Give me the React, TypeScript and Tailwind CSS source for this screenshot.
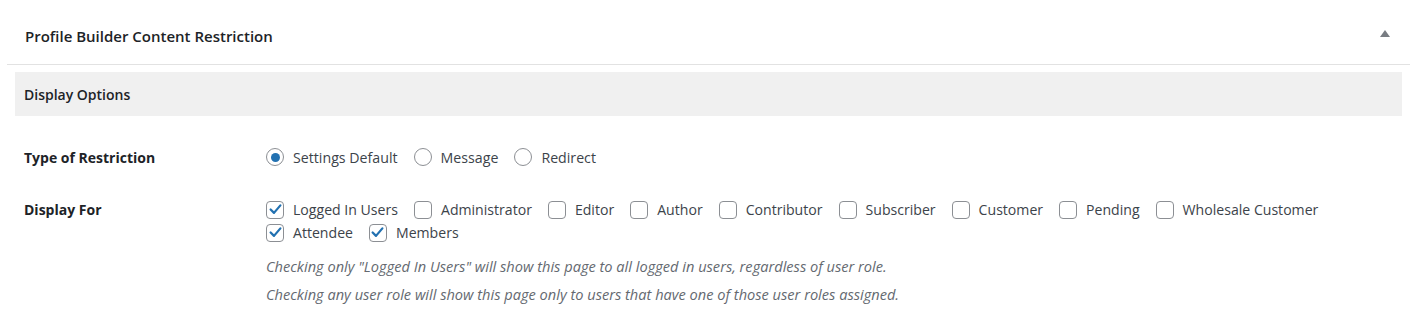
import React from 'react';

const font = { fontFamily: '"Open Sans", "Noto Sans", sans-serif' };

function Radio({ label, checked }: { label: string; checked?: boolean }) {
  return (
    <label className="flex items-center gap-[9px] mr-[16px]">
      <span className="w-[18px] h-[18px] rounded-full border border-[#8c8f94] flex items-center justify-center bg-white">
        {checked && <span className="w-[9px] h-[9px] rounded-full bg-[#2271b1]" />}
      </span>
      <span>{label}</span>
    </label>
  );
}

function Check({ label, checked }: { label: string; checked?: boolean }) {
  return (
    <label className="flex items-center gap-[9px] mr-[16px] h-[23px]">
      <span className="w-[18px] h-[18px] rounded-[4px] border border-[#8c8f94] flex items-center justify-center bg-white">
        {checked && (
          <svg width="15" height="15" viewBox="0 0 20 20">
            <path d="M3.5 10 L8 14.5 L16.5 4.5" fill="none" stroke="#2271b1" strokeWidth="3" strokeLinecap="round" strokeLinejoin="round" />
          </svg>
        )}
      </span>
      <span>{label}</span>
    </label>
  );
}

const roles: [string, boolean][] = [
  ['Logged In Users', true],
  ['Administrator', false],
  ['Editor', false],
  ['Author', false],
  ['Contributor', false],
  ['Subscriber', false],
  ['Customer', false],
  ['Pending', false],
  ['Wholesale Customer', false],
  ['Attendee', true],
  ['Members', true],
];

export default function App() {
  return (
    <div className="w-[1418px] h-[327px] bg-white pl-[7px] pr-[8px] text-[14px] text-[#3c434a]" style={font}>
      {/* postbox header */}
      <div className="h-[65px] border-b border-[#e2e2e2] flex items-center justify-between pl-[18px] pr-[20px]">
        <h2 className="text-[15px] font-semibold text-[#1d2327] pt-[8px]">Profile Builder Content Restriction</h2>
        <span className="w-0 h-0 border-l-[5px] border-r-[5px] border-b-[7px] border-l-transparent border-r-transparent border-b-[#787c82] mt-[3px]" />
      </div>

      <div className="mx-[8px] mt-[7px] h-[44px] bg-[#f0f0f0] flex items-center pl-[9px]">
        <span className="text-[#1d2327] font-semibold">Display Options</span>
      </div>

      <div className="pl-[17px] pr-[16px]">
        <div className="flex items-center mt-[30px] h-[23px]">
          <div className="w-[242px] font-bold text-[#1d2327]">Type of Restriction</div>
          <div className="flex items-center text-[14.2px]">
            <Radio label="Settings Default" checked />
            <Radio label="Message" />
            <Radio label="Redirect" />
          </div>
        </div>

        <div className="flex mt-[29px]">
          <div className="w-[242px] shrink-0 font-bold text-[#1d2327] h-[23px] flex items-center">Display For</div>
          <div className="flex-1">
            <div className="flex flex-wrap text-[14.1px]">
              {roles.map(([r, c]) => (
                <Check key={r} label={r} checked={c} />
              ))}
            </div>
            <div className="mt-[8px] italic text-[14.6px] text-[#646970] leading-[28px]">
              <p>Checking only "Logged In Users" will show this page to all logged in users, regardless of user role.</p>
              <p>Checking any user role will show this page only to users that have one of those user roles assigned.</p>
            </div>
          </div>
        </div>
      </div>
    </div>
  );
}
